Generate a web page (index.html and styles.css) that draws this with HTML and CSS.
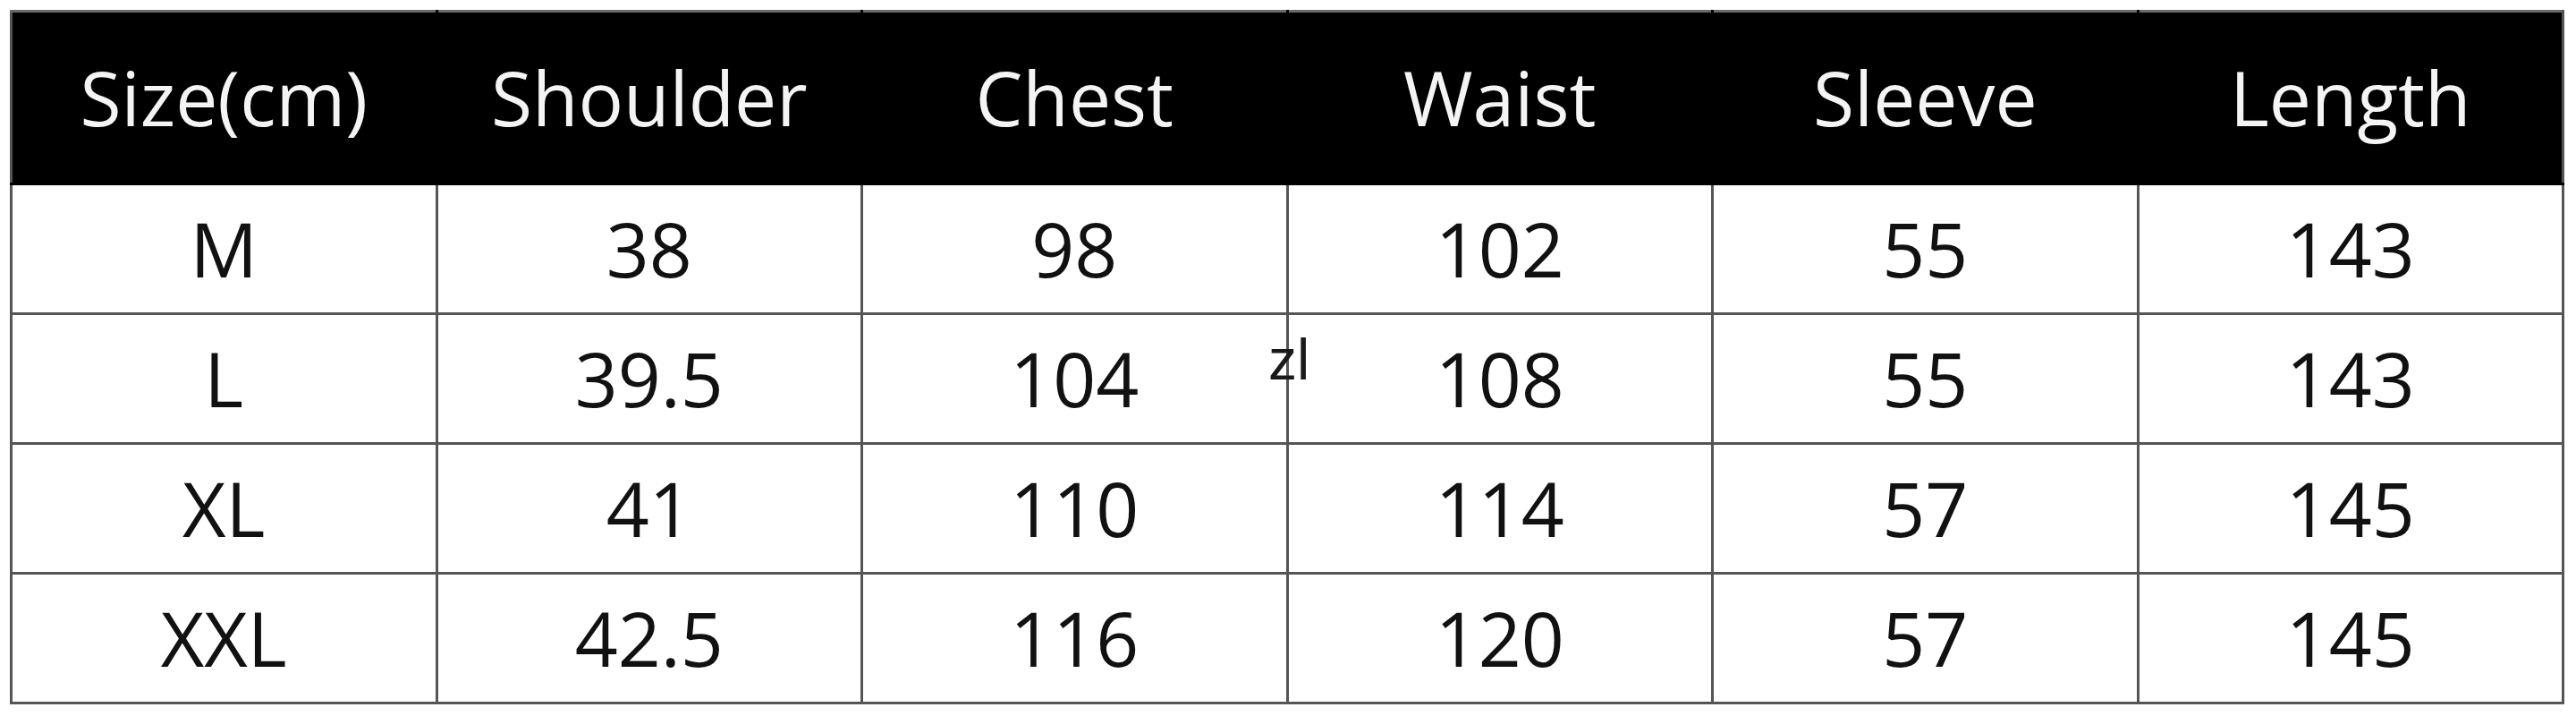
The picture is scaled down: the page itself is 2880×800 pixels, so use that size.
FILE: index.html
```html
<!DOCTYPE html>
<html lang="en">
<head>
<meta charset="utf-8">
<title>Size chart</title>
<link rel="stylesheet" href="styles.css">
</head>
<body>
<div class="sheet">
  <table class="size-table">
    <thead>
      <tr class="head-row">
        <th>Size(cm)</th>
        <th>Shoulder</th>
        <th>Chest</th>
        <th>Waist</th>
        <th>Sleeve</th>
        <th>Length</th>
      </tr>
    </thead>
    <tbody>
      <tr><td>M</td><td>38</td><td>98</td><td>102</td><td>55</td><td>143</td></tr>
      <tr><td>L</td><td>39.5</td><td>104</td><td>108</td><td>55</td><td>143</td></tr>
      <tr><td>XL</td><td>41</td><td>110</td><td>114</td><td>57</td><td>145</td></tr>
      <tr><td>XXL</td><td>42.5</td><td>116</td><td>120</td><td>57</td><td>145</td></tr>
    </tbody>
  </table>
  <span class="mark">zl</span>
</div>
</body>
</html>
```
FILE: styles.css
```css
html, body {
  margin: 0;
  padding: 0;
  background: #ffffff;
}

.sheet {
  position: relative;
  padding: 11px 0 0 11px;
}

.size-table {
  border-collapse: collapse;
  table-layout: fixed;
  width: 2856px;
  font-family: "Open Sans", "Noto Sans", sans-serif;
  font-size: 84px;
  color: #111111;
}

.size-table th,
.size-table td {
  border: 3px solid #555555;
  text-align: center;
  vertical-align: middle;
  padding: 0;
  line-height: 1;
}

.head-row th {
  background: #000000;
  color: #f4f4f4;
  font-weight: 400;
  height: 190px;
  border-color: #000000;
  border-top-color: #6a6a6a;
}

.head-row th:first-child {
  border-left-color: #555555;
}

.head-row th:last-child {
  border-right-color: #555555;
}

.size-table td {
  height: 142px;
}

.mark {
  position: absolute;
  left: 1418px;
  top: 370px;
  font-family: "Liberation Sans", Arial, sans-serif;
  font-size: 64px;
  line-height: 1;
  color: #1a1a1a;
}
```
